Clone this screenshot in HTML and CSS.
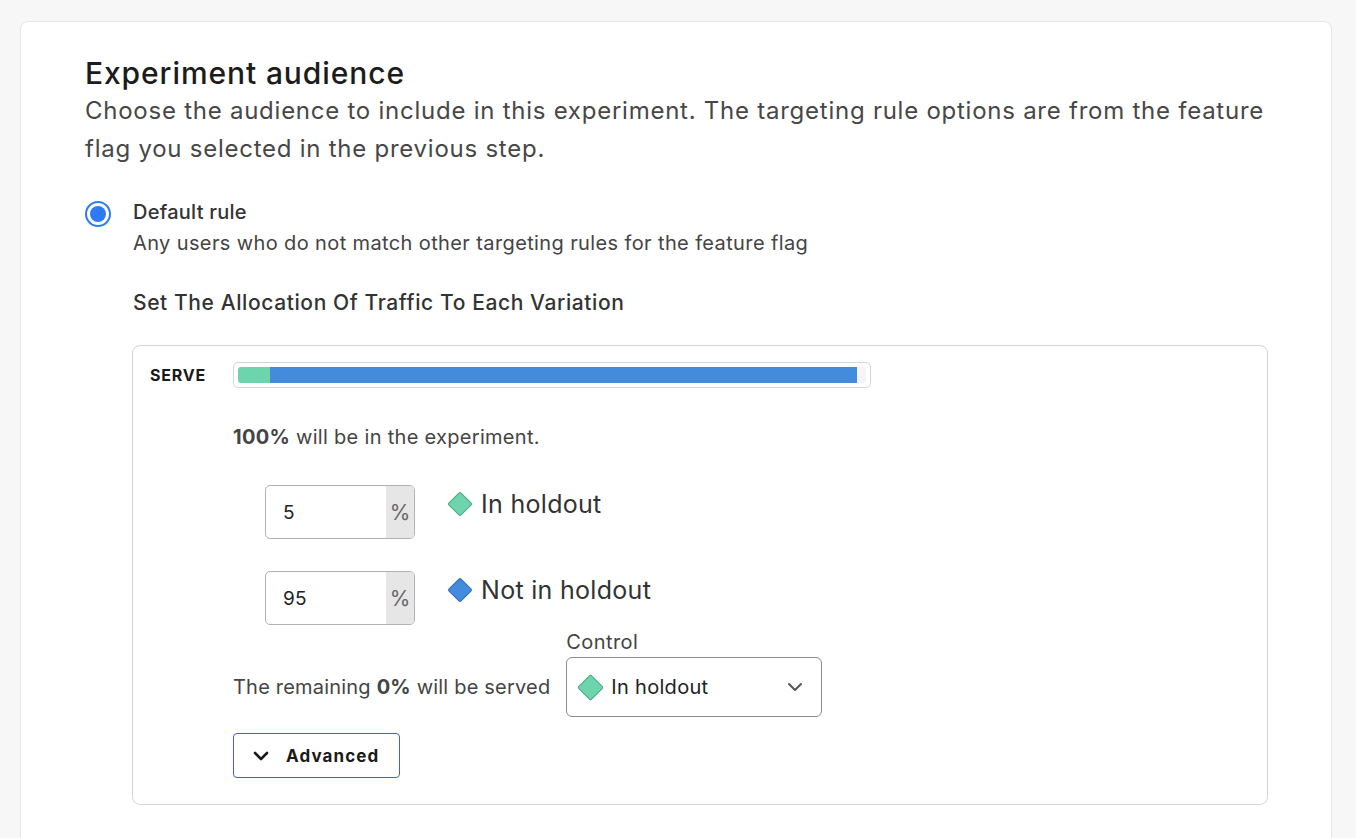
FILE: index.html
```html
<!DOCTYPE html>
<html lang="en">
<head>
<meta charset="utf-8">
<title>Experiment audience</title>
<link rel="stylesheet" href="styles.css">
</head>
<body>
<div class="card">
  <h1 class="title">Experiment audience</h1>
  <p class="desc">Choose the audience to include in this experiment. The targeting rule options are from the feature flag you selected in the previous step.</p>

  <div class="option">
    <span class="radio"></span>
    <div class="option-body">
      <div class="option-label">Default rule</div>
      <div class="option-sub">Any users who do not match other targeting rules for the feature flag</div>
      <div class="section-title">Set The Allocation Of Traffic To Each Variation</div>

      <div class="serve-box">
        <div class="serve-row">
          <div class="serve-label">SERVE</div>
          <div class="bar">
            <div class="track">
              <div class="seg seg-green" style="width:5.1%"></div>
              <div class="seg seg-blue" style="width:93.5%"></div>
            </div>
          </div>
        </div>

        <div class="serve-content">
          <div class="summary"><b>100%</b> will be in the experiment.</div>

          <div class="alloc-list">
            <div class="alloc-row">
              <div class="pct-input">
                <span class="pct-value">5</span>
                <span class="pct-addon">%</span>
              </div>
              <div class="variation">
                <span class="diamond diamond-green"></span>
                <span>In holdout</span>
              </div>
            </div>
            <div class="alloc-row">
              <div class="pct-input">
                <span class="pct-value">95</span>
                <span class="pct-addon">%</span>
              </div>
              <div class="variation">
                <span class="diamond diamond-blue"></span>
                <span>Not in holdout</span>
              </div>
            </div>
          </div>

          <div class="remaining">
            <div class="remaining-text">The remaining&nbsp;<b>0%</b>&nbsp;will be served</div>
            <div class="control">
              <div class="control-label">Control</div>
              <div class="select">
                <span class="diamond diamond-green diamond-lg"></span>
                <span class="select-text">In holdout</span>
                <svg class="select-chevron" width="16" height="10" viewBox="0 0 16 10"><path d="M2 2 L8 8 L14 2" fill="none" stroke="#555" stroke-width="2" stroke-linecap="round" stroke-linejoin="round"/></svg>
              </div>
            </div>
          </div>

          <button class="advanced" type="button">
            <svg width="16" height="10" viewBox="0 0 16 10"><path d="M2 2 L8 8 L14 2" fill="none" stroke="#1a1a1a" stroke-width="2.6" stroke-linecap="round" stroke-linejoin="round"/></svg>
            <span>Advanced</span>
          </button>
        </div>
      </div>
    </div>
  </div>
</div>
</body>
</html>
```

FILE: styles.css
```css
html, body {
  margin: 0;
  height: 838px;
  overflow: hidden;
}
body {
  background: #f7f7f7;
  font-family: Inter, "Noto Sans", "Liberation Sans", sans-serif;
  color: #333;
}
.card {
  margin: 21px 24px 0 20px;
  background: #fff;
  border: 1px solid #e6e6e6;
  border-radius: 8px;
  padding: 34px 63px 60px 64px;
}
.title {
  margin: 0;
  font-size: 30px;
  line-height: 35px;
  font-weight: 500;
  letter-spacing: 0.9px;
  color: #1c1c1c;
}
.desc {
  margin: 1px 0 0;
  font-size: 24px;
  line-height: 38px;
  letter-spacing: 0.75px;
  color: #474747;
}
.option {
  display: flex;
  gap: 22px;
  margin-top: 30px;
}
.radio {
  flex: none;
  width: 26px;
  height: 26px;
  box-sizing: border-box;
  border: 2px solid #2f7bf5;
  border-radius: 50%;
  margin-top: 3px;
  display: flex;
  align-items: center;
  justify-content: center;
}
.radio::after {
  content: "";
  width: 16px;
  height: 16px;
  border-radius: 50%;
  background: #2f7bf5;
}
.option-body {
  flex: 1;
}
.option-label {
  margin-top: 2px;
  font-size: 20px;
  line-height: 24px;
  font-weight: 500;
  letter-spacing: 0.25px;
  color: #333;
}
.option-sub {
  margin-top: 5px;
  font-size: 20px;
  line-height: 28px;
  letter-spacing: 0.38px;
  color: #444;
}
.section-title {
  margin-top: 32px;
  font-size: 21px;
  line-height: 28px;
  font-weight: 500;
  letter-spacing: 0.6px;
  color: #333;
}
.serve-box {
  margin-top: 28px;
  margin-left: -1px;
  border: 1px solid #d6d6d6;
  border-radius: 8px;
  padding: 16px 16px 26px 17px;
}
.serve-row {
  display: flex;
  align-items: center;
  height: 26px;
}
.serve-label {
  width: 83px;
  flex: none;
  font-size: 16px;
  font-weight: 700;
  letter-spacing: 0.8px;
  color: #1a1a1a;
}
.bar {
  width: 638px;
  height: 26px;
  box-sizing: border-box;
  border: 1px solid #d5d5d5;
  border-radius: 5px;
  padding: 4px;
}
.track {
  height: 16px;
  display: flex;
  background: #f5f5f5;
  border-radius: 3px;
  overflow: hidden;
}
.seg {
  height: 100%;
}
.seg-green {
  background: #6dd5ad;
}
.seg-blue {
  background: #428bdd;
}
.serve-content {
  padding-left: 83px;
}
.summary {
  margin-top: 35px;
  font-size: 20px;
  line-height: 28px;
  letter-spacing: 0.3px;
  color: #444;
}
.summary b, .remaining-text b {
  font-weight: 700;
  color: #444;
}
.alloc-list {
  margin-top: 34px;
  padding-left: 32px;
  display: flex;
  flex-direction: column;
  gap: 32px;
}
.alloc-row {
  display: flex;
  align-items: flex-start;
}
.pct-input {
  width: 150px;
  height: 54px;
  box-sizing: border-box;
  border: 1px solid #b3b3b3;
  border-radius: 5px;
  display: flex;
  overflow: hidden;
}
.pct-value {
  flex: 1;
  padding-left: 17px;
  display: flex;
  align-items: center;
  font-size: 19px;
  letter-spacing: 0.3px;
  color: #222;
}
.pct-addon {
  width: 28px;
  background: #e6e6e6;
  color: #666;
  font-size: 21px;
  display: flex;
  align-items: center;
  justify-content: center;
}
.variation {
  display: flex;
  align-items: center;
  gap: 8px;
  margin-left: 32px;
  margin-top: 3px;
  font-size: 25px;
  line-height: 32px;
  letter-spacing: 0.3px;
  color: #333;
}
.diamond {
  flex: none;
  width: 18px;
  height: 18px;
  box-sizing: border-box;
  margin: 0 4px;
  border-radius: 2px;
  transform: rotate(45deg);
}
.diamond-green {
  background: #6dd5ad;
  border: 1px solid #4aa882;
}
.diamond-blue {
  background: #428bdd;
  border: 1px solid #2f6fb8;
}
.diamond-lg {
  width: 19px;
  height: 19px;
}
.remaining {
  display: flex;
  align-items: flex-end;
  gap: 16px;
  margin-top: 5px;
}
.remaining-text {
  height: 60px;
  display: flex;
  align-items: center;
  font-size: 20px;
  letter-spacing: 0.2px;
  color: #444;
}
.control-label {
  font-size: 20px;
  line-height: 24px;
  letter-spacing: 0.4px;
  color: #444;
  margin-bottom: 3px;
}
.select {
  width: 256px;
  height: 60px;
  box-sizing: border-box;
  border: 1px solid #8c8c8c;
  border-radius: 6px;
  display: flex;
  align-items: center;
  gap: 7px;
  padding: 0 18px 0 10px;
}
.select-text {
  flex: 1;
  font-size: 20px;
  letter-spacing: 0.3px;
  color: #222;
}
.advanced {
  margin-top: 16px;
  display: flex;
  align-items: center;
  gap: 17px;
  width: 167px;
  height: 45px;
  box-sizing: border-box;
  padding: 0 0 0 19px;
  background: #fff;
  border: 1px solid #4b5bd1;
  border-radius: 4px;
  font-family: inherit;
  font-size: 17px;
  font-weight: 700;
  letter-spacing: 1.1px;
  color: #1a1a1a;
}
```
